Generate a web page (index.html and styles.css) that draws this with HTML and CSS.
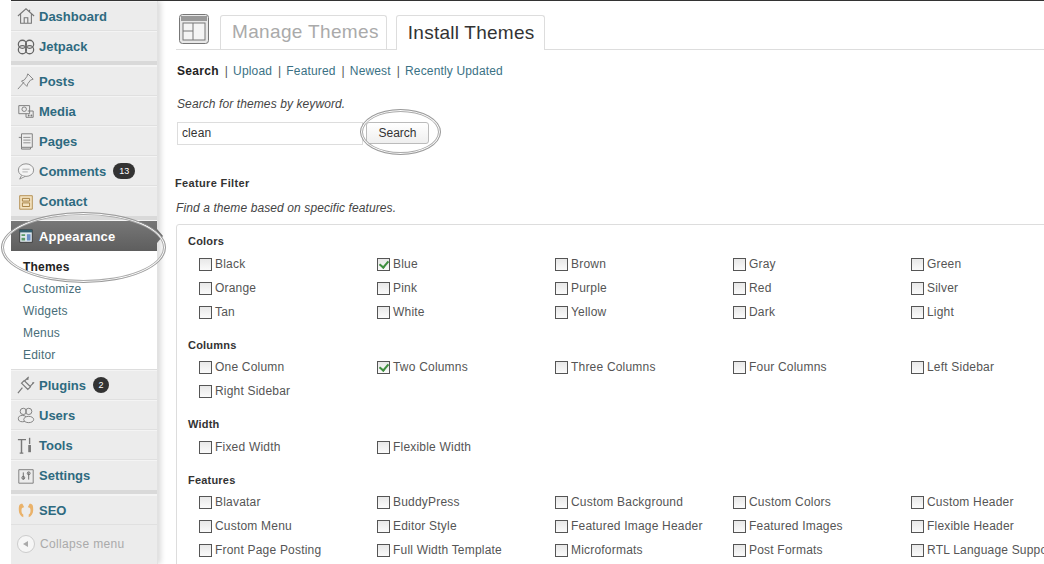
FILE: index.html
```html
<!DOCTYPE html>
<html lang="en">
<head>
<meta charset="utf-8">
<title>Install Themes</title>
<link rel="stylesheet" href="styles.css">
</head>
<body>
<div class="page">
  <aside class="sidebar">
    <a class="item"><svg class="ico" viewBox="0 0 20 20"><path d="M1 10 10 2l9 8M4 8v10h12V8M8 18v-6h4v6M14 3v3" fill="none" stroke="#777" stroke-width="1.2"/></svg><span class="lbl">Dashboard</span></a>
    <a class="item last"><svg class="ico" viewBox="0 0 20 20"><circle cx="6" cy="7" r="4.5" fill="none" stroke="#666" stroke-width="1.4"/><circle cx="14" cy="7" r="4.5" fill="none" stroke="#666" stroke-width="1.4"/><circle cx="6" cy="13" r="4.5" fill="none" stroke="#666" stroke-width="1.4"/><circle cx="14" cy="13" r="4.5" fill="none" stroke="#666" stroke-width="1.4"/></svg><span class="lbl">Jetpack</span></a>
    <div class="sep"></div>
    <a class="item"><svg class="ico" viewBox="0 0 20 20"><path d="M1 19 8 11M12 2l6 6-3 1-3 4-1 3-6-6 3-1 3-4z" fill="none" stroke="#888" stroke-width="1.1"/></svg><span class="lbl">Posts</span></a>
    <a class="item"><svg class="ico" viewBox="0 0 20 20"><path d="M2 4h12v9H2z" fill="none" stroke="#777"/><circle cx="8" cy="8" r="2.5" fill="none" stroke="#777"/><path d="M12 10h6v7h-8v-4" fill="none" stroke="#777"/><circle cx="13" cy="15" r="1" fill="#777"/><circle cx="16" cy="15" r="1" fill="#777"/></svg><span class="lbl">Media</span></a>
    <a class="item"><svg class="ico" viewBox="0 0 20 20"><path d="M2 6h3v13h10v-2" fill="#ddd" stroke="#777"/><path d="M5 2h12v15H5z" fill="#eee" stroke="#777"/><path d="M7 6h8M7 9h8M7 12h8" stroke="#888"/></svg><span class="lbl">Pages</span></a>
    <a class="item"><svg class="ico" viewBox="0 0 20 20"><ellipse cx="10" cy="9" rx="8.5" ry="7" fill="#f4f4f4" stroke="#888"/><path d="M5 15 3 19l6-3" fill="#f4f4f4" stroke="#888"/><path d="M6 8h8M6 11h6" stroke="#aaa"/></svg><span class="lbl">Comments</span><span class="badge wide">13</span></a>
    <a class="item last"><svg class="ico" viewBox="0 0 20 20"><path d="M3 3h14v15H3z" fill="#f3e2c0" stroke="#b08a4a"/><path d="M6 6h8v3H6zM6 11h8v4H6z" fill="none" stroke="#a07a3a"/></svg><span class="lbl">Contact</span></a>
    <div class="sep"></div>
    <a class="item current"><svg class="ico" viewBox="0 0 20 20"><path d="M3 3h14v14H3z" fill="#dfe8ee" stroke="#333"/><path d="M3 3h14v3H3z" fill="#34606f"/><path d="M5 8h4v2H5z" fill="#5a9a6a"/><path d="M5 12h4v3H5z" fill="#5a9a6a"/><path d="M11 8h4v7h-4z" fill="#6a8fc8"/></svg><span class="lbl">Appearance</span></a>
    <ul class="submenu">
      <li class="on">Themes</li>
      <li>Customize</li>
      <li>Widgets</li>
      <li>Menus</li>
      <li>Editor</li>
    </ul>
    <a class="item"><svg class="ico" viewBox="0 0 20 20"><path d="M1 19 6 13M5 8l7 7 3-3-7-7zM9 5l4-4M15 11l4-4M11 4l2-1M17 9l1-2" fill="none" stroke="#777" stroke-width="1.3"/></svg><span class="lbl">Plugins</span><span class="badge">2</span></a>
    <a class="item"><svg class="ico" viewBox="0 0 20 20"><circle cx="7" cy="6" r="3.5" fill="none" stroke="#777"/><circle cx="13" cy="6" r="3.5" fill="none" stroke="#777"/><ellipse cx="6" cy="14" rx="4.5" ry="3.5" fill="none" stroke="#777"/><ellipse cx="13" cy="15" rx="5.5" ry="3.5" fill="#eee" stroke="#777"/></svg><span class="lbl">Users</span></a>
    <a class="item"><svg class="ico" viewBox="0 0 20 20"><path d="M1 4h9M5 4v15M3 19h4" fill="none" stroke="#777" stroke-width="1.6"/><path d="M14 2v7" stroke="#777" stroke-width="1.5"/><path d="M12.5 10h3v8h-3z" fill="#777"/></svg><span class="lbl">Tools</span></a>
    <a class="item last"><svg class="ico" viewBox="0 0 20 20"><path d="M2 3h16v15H2z" fill="none" stroke="#777"/><path d="M7 6v8M13 6v8" stroke="#666"/><circle cx="7" cy="12" r="1.6" fill="none" stroke="#666"/><circle cx="13" cy="7" r="1.6" fill="none" stroke="#666"/></svg><span class="lbl">Settings</span></a>
    <div class="sep"></div>
    <a class="item seo"><svg class="ico" viewBox="0 0 20 20"><path d="M6 3C2 3 2 6 2 10s2 7 5 8v-3c-2-1-2-3-2-5s1-3 3-3zM14 3c4 0 4 3 4 7s-2 7-5 8v-3c2-1 2-3 2-5s-1-3-3-3z" fill="#eab26a"/></svg><span class="lbl">SEO</span></a>
    <a class="collapse"><span class="cbtn"><svg viewBox="0 0 8 8" class="carrow"><path d="M6 1v6L1 4z" fill="#aaa"/></svg></span>Collapse menu</a>
  </aside>

  <main class="main">
    <div class="tabs">
      <svg class="page-ico" viewBox="0 0 30 30"><rect x="0.5" y="0.5" width="29" height="29" rx="3" fill="#e8e8e8" stroke="#777"/><path d="M2 2h26v5H2z" fill="#999"/><rect x="4" y="9" width="22" height="17" fill="#f4f4f4" stroke="#777"/><path d="M14 9v17M4 17h10" stroke="#777"/></svg>
      <a class="tab">Manage Themes</a>
      <a class="tab active">Install Themes</a>
    </div>
    <nav class="subnav"><b>Search</b><i>|</i><a>Upload</a><i>|</i><a>Featured</a><i>|</i><a>Newest</a><i>|</i><a>Recently Updated</a></nav>
    <p class="hint search-hint">Search for themes by keyword.</p>
    <div class="search">
      <div class="input">clean</div>
      <div class="btn">Search</div>
    </div>
    <h4 class="ff">Feature Filter</h4>
    <p class="hint ff-hint">Find a theme based on specific features.</p>
    <div class="filters">
      <h5>Colors</h5>
      <div class="grid roomy">
        <label><span class="cb"></span>Black</label><label><span class="cb on"></span>Blue</label><label><span class="cb"></span>Brown</label><label><span class="cb"></span>Gray</label><label><span class="cb"></span>Green</label>
        <label><span class="cb"></span>Orange</label><label><span class="cb"></span>Pink</label><label><span class="cb"></span>Purple</label><label><span class="cb"></span>Red</label><label><span class="cb"></span>Silver</label>
        <label><span class="cb"></span>Tan</label><label><span class="cb"></span>White</label><label><span class="cb"></span>Yellow</label><label><span class="cb"></span>Dark</label><label><span class="cb"></span>Light</label>
      </div>
      <h5>Columns</h5>
      <div class="grid">
        <label><span class="cb"></span>One Column</label><label><span class="cb on"></span>Two Columns</label><label><span class="cb"></span>Three Columns</label><label><span class="cb"></span>Four Columns</label><label><span class="cb"></span>Left Sidebar</label>
        <label><span class="cb"></span>Right Sidebar</label>
      </div>
      <h5>Width</h5>
      <div class="grid roomy">
        <label><span class="cb"></span>Fixed Width</label><label><span class="cb"></span>Flexible Width</label>
      </div>
      <h5>Features</h5>
      <div class="grid">
        <label><span class="cb"></span>Blavatar</label><label><span class="cb"></span>BuddyPress</label><label><span class="cb"></span>Custom Background</label><label><span class="cb"></span>Custom Colors</label><label><span class="cb"></span>Custom Header</label>
        <label><span class="cb"></span>Custom Menu</label><label><span class="cb"></span>Editor Style</label><label><span class="cb"></span>Featured Image Header</label><label><span class="cb"></span>Featured Images</label><label><span class="cb"></span>Flexible Header</label>
        <label><span class="cb"></span>Front Page Posting</label><label><span class="cb"></span>Full Width Template</label><label><span class="cb"></span>Microformats</label><label><span class="cb"></span>Post Formats</label><label><span class="cb"></span>RTL Language Support</label>
      </div>
    </div>
  </main>
</div>
<div class="ring ring-menu"></div>
<div class="ring ring-search"></div>
</body>
</html>
```

FILE: styles.css
```css
html, body { margin: 0; padding: 0; height: 564px; overflow: hidden; background: #fff; }
body { font-family: "Liberation Sans", Arial, sans-serif; color: #333; position: relative; }
.page { display: flex; margin-left: 11px; height: 563px; border-top: 1px solid #333; overflow: hidden; }

.sidebar { width: 146px; flex: none; background: #ececec; box-shadow: 3px 0 5px #ddd; border-right: 1px solid #e2e2e2; box-sizing: content-box; position: relative; z-index: 1; }
.item { display: flex; align-items: center; height: 30px; box-sizing: border-box; padding-left: 6px; border-top: 1px solid #f4f4f4; border-bottom: 1px solid #e0e0e0; }
.item.last { border-bottom: 0; }
.ico { width: 18px; height: 18px; flex: none; margin-right: 4px; }
.lbl { font-size: 13px; font-weight: bold; color: #2e6a80; }
.sep { height: 5px; background: #d9d9d9; border-bottom: 1px solid #f4f4f4; box-sizing: border-box; }
.badge { display: inline-block; margin-left: 7px; min-width: 16px; height: 16px; line-height: 16px; border-radius: 8px; background: #333; color: #fff; font-size: 9px; text-align: center; }
.badge.wide { min-width: 22px; margin-left: 7px; }
.item.current { background: linear-gradient(#777, #5e5e5e); border: 0; position: relative; }
.item.current .lbl { color: #fff; letter-spacing: 0.2px; }
.item.current::after { content: ""; position: absolute; left: 100%; top: 8px; border: 7px solid transparent; border-left: 6px solid #6a6a6a; border-right: 0; }
.submenu { list-style: none; margin: 0; padding: 5px 0 3px 12px; height: 119px; box-sizing: border-box; background: #fff; border-bottom: 1px solid #ddd; }
.submenu li { height: 22px; line-height: 22px; font-size: 12px; color: #486d78; letter-spacing: 0.2px; }
.submenu li.on { color: #222; font-weight: bold; }
.item.seo { border-bottom: 1px solid #e0e0e0; }
.collapse { display: flex; align-items: center; height: 30px; margin-top: 4px; padding-left: 6px; font-size: 12px; color: #aaa; letter-spacing: 0.35px; }
.cbtn { width: 16px; height: 16px; border-radius: 50%; background: #f6f6f6; border: 1px solid #ccc; margin-right: 5px; display: flex; align-items: center; justify-content: center; }
.carrow { width: 8px; height: 8px; }

.main { flex: 1; min-width: 0; padding: 13px 0 0 18px; overflow: hidden; }
.tabs { display: flex; align-items: flex-end; height: 35px; border-bottom: 1px solid #ddd; }
.page-ico { width: 30px; height: 30px; align-self: flex-start; margin: 0 11px 0 3px; }
.tab { height: 34px; box-sizing: border-box; padding: 0 7px 0 11px; margin-right: 9px; border: 1px solid #ddd; border-bottom: 0; border-radius: 3px 3px 0 0; font-size: 19px; line-height: 32px; color: #aaa; letter-spacing: 0.35px; }
.tab.active { height: 35px; padding: 0 10px 0 11px; color: #333; background: #fff; margin-bottom: -1px; letter-spacing: 0.25px; line-height: 33px; }

.subnav { margin: 14px 0 0 1px; font-size: 12px; line-height: 14px; color: #555; letter-spacing: 0.15px; display: flex; }
.subnav b { color: #222; letter-spacing: 0.3px; }
.subnav a { color: #3a7184; }
.subnav i { font-style: normal; margin: 0 5px 0 6px; }
.hint { margin: 0; font-size: 12px; font-style: italic; color: #444; line-height: 14px; letter-spacing: 0.1px; }
.search-hint { margin: 19px 0 0 1px; }
.search { display: flex; margin: 11px 0 0 1px; }
.input { width: 186px; height: 23px; box-sizing: border-box; border: 1px solid #ddd; padding-left: 4px; font-size: 12px; line-height: 21px; letter-spacing: 0.1px; }
.btn { width: 63px; height: 22px; margin-left: 3px; box-sizing: border-box; border: 1px solid #bbb; border-radius: 3px; background: linear-gradient(#fff, #efefef); text-align: center; font-size: 12px; line-height: 20px; }
.ff { margin: 31px 0 0 -1px; font-size: 11px; line-height: 14px; color: #333; letter-spacing: 0.35px; }
.ff-hint { margin-top: 11px; }
.filters { margin-top: 9px; height: 380px; width: 900px; border: 1px solid #ddd; border-radius: 3px; padding: 0 0 0 11px; box-sizing: border-box; }
.filters h5 { margin: 0; font-size: 11px; line-height: 14px; color: #333; letter-spacing: 0.2px; padding-top: 9px; }
.grid { display: grid; grid-template-columns: repeat(5, 178px); grid-auto-rows: 24px; padding-left: 11px; margin-top: 3px; margin-bottom: 5px; }
.grid.roomy { margin-top: 4px; }
.grid label { display: flex; align-items: center; font-size: 12px; color: #555; letter-spacing: 0.2px; white-space: nowrap; }
.cb { display: block; width: 13px; height: 13px; flex: none; box-sizing: border-box; border: 1px solid #555; background: linear-gradient(#e8e8e8, #fafafa); margin-right: 3px; position: relative; }
.cb.on::after { content: ""; position: absolute; left: 3px; top: 0; width: 4px; height: 7px; border: solid #3f8f3f; border-width: 0 2px 2px 0; transform: rotate(40deg); }

.ring { position: absolute; border: 1px solid #999; border-radius: 50%; box-shadow: inset 0 0 0 1px #fff, inset 0 0 0 2px #aaa; box-sizing: border-box; z-index: 2; }
.ring-menu { left: 1px; top: 212px; width: 165px; height: 71px; }
.ring-search { left: 360px; top: 109px; width: 81px; height: 46px; }
```
